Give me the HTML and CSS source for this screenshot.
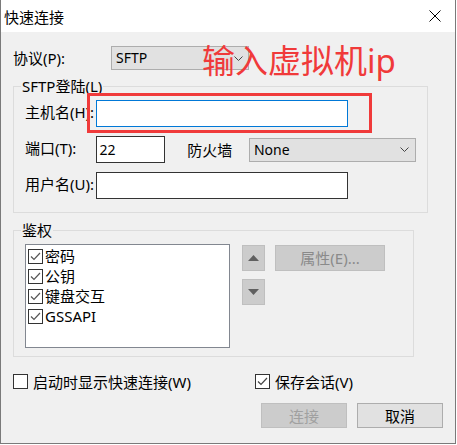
FILE: index.html
```html
<!DOCTYPE html>
<html lang="zh-CN">
<head>
<meta charset="utf-8">
<title>快速连接</title>
<link rel="stylesheet" href="styles.css">
</head>
<body>
<div class="window">
  <div class="titlebar">
    <span class="title">快速连接</span>
    <svg class="close" width="12" height="12" viewBox="0 0 12 12"><path d="M0.5 0.5 L11.5 11.5 M11.5 0.5 L0.5 11.5" stroke="#000" stroke-width="1" fill="none"/></svg>
  </div>
  <div class="content">
    <div class="proto-row">
      <span class="lbl lbl-proto">协议(P):</span>
      <div class="combo combo-proto"><span>SFTP</span><svg class="chev" width="9" height="5" viewBox="0 0 9 5"><path d="M0.5 0.5 L4.5 4.5 L8.5 0.5" stroke="#444" fill="none"/></svg></div>
    </div>
    <div class="group group-login">
      <div class="group-title">SFTP登陆(L)</div>
      <div class="field-row">
        <span class="lbl lbl-field">主机名(H):</span>
        <div class="input input-wide focused"></div>
      </div>
      <div class="field-row">
        <span class="lbl lbl-field">端口(T):</span>
        <div class="input input-port">22</div>
        <span class="lbl lbl-fw">防火墙</span>
        <div class="combo combo-fw"><span>None</span><svg class="chev" width="9" height="5" viewBox="0 0 9 5"><path d="M0.5 0.5 L4.5 4.5 L8.5 0.5" stroke="#444" fill="none"/></svg></div>
      </div>
      <div class="field-row">
        <span class="lbl lbl-field">用户名(U):</span>
        <div class="input input-wide"></div>
      </div>
    </div>
    <div class="group group-auth">
      <div class="group-title">鉴权</div>
      <div class="auth-body">
        <div class="listbox">
          <div class="item"><span class="cb checked"><svg width="13" height="13" viewBox="0 0 13 13"><path d="M2 6.5 L5 9.5 L11 3" stroke="#555" stroke-width="1.2" fill="none"/></svg></span><span>密码</span></div>
          <div class="item"><span class="cb checked"><svg width="13" height="13" viewBox="0 0 13 13"><path d="M2 6.5 L5 9.5 L11 3" stroke="#555" stroke-width="1.2" fill="none"/></svg></span><span>公钥</span></div>
          <div class="item"><span class="cb checked"><svg width="13" height="13" viewBox="0 0 13 13"><path d="M2 6.5 L5 9.5 L11 3" stroke="#555" stroke-width="1.2" fill="none"/></svg></span><span>键盘交互</span></div>
          <div class="item"><span class="cb checked"><svg width="13" height="13" viewBox="0 0 13 13"><path d="M2 6.5 L5 9.5 L11 3" stroke="#555" stroke-width="1.2" fill="none"/></svg></span><span>GSSAPI</span></div>
        </div>
        <div class="arrows">
          <div class="btn arrow-btn"><svg width="11" height="6" viewBox="0 0 11 6"><polygon points="5.5,0 11,6 0,6" fill="#606060"/></svg></div>
          <div class="btn arrow-btn"><svg width="11" height="6" viewBox="0 0 11 6"><polygon points="0,0 11,0 5.5,6" fill="#606060"/></svg></div>
        </div>
        <div class="btn btn-disabled btn-prop">属性(E)...</div>
      </div>
    </div>
    <div class="options-row">
      <div class="opt opt-start"><span class="cb"></span><span>启动时显示快速连接(W)</span></div>
      <div class="opt"><span class="cb checked"><svg width="13" height="13" viewBox="0 0 13 13"><path d="M2 6.5 L5 9.5 L11 3" stroke="#444" stroke-width="1.2" fill="none"/></svg></span><span>保存会话(V)</span></div>
    </div>
    <div class="buttons-row">
      <div class="btn btn-disabled btn-main">连接</div>
      <div class="btn btn-normal btn-main">取消</div>
    </div>
  </div>
  <div class="annot-box"></div>
  <div class="annot-text">输入虚拟机ip</div>
</div>
</body>
</html>
```

FILE: styles.css
```css
html, body {
  margin: 0;
  padding: 0;
  background: #ffffff;
}
body {
  font-family: "Noto Sans", "Noto Sans CJK SC", sans-serif;
  font-size: 15px;
  line-height: 16px;
  color: #000;
}
.window {
  position: relative;
  width: 456px;
  height: 444px;
  box-sizing: border-box;
  border: 1px solid #7a7a7a;
  border-top: none;
  background: #f0f0f0;
  display: flex;
  flex-direction: column;
}
.titlebar {
  height: 32px;
  background: #ffffff;
  display: flex;
  align-items: center;
  justify-content: space-between;
  padding-left: 3px;
  padding-right: 14px;
}
.title {
  font-size: 15px;
  line-height: 16px;
  margin-top: 2px;
}
.close {
  display: block;
}
.content {
  padding-left: 12px;
  display: flex;
  flex-direction: column;
}
.proto-row {
  margin-top: 14px;
  height: 24px;
  display: flex;
  align-items: center;
}
.lbl {
  white-space: nowrap;
}
.lbl-proto {
  width: 98px;
}
.combo {
  box-sizing: border-box;
  background: #e1e1e1;
  border: 1px solid #adadad;
  display: flex;
  align-items: center;
  justify-content: space-between;
  padding-left: 4px;
  padding-right: 5px;
  font-size: 14px;
}
.chev {
  display: block;
}
.combo-proto {
  width: 138px;
  height: 24px;
}
.combo-fw {
  width: 168px;
  height: 24px;
  padding-right: 6px;
}
.group {
  box-sizing: border-box;
  border: 1px solid #dcdcdc;
  height: 127px;
  padding: 0 11px;
}
.group-login {
  width: 415px;
  margin-top: 16px;
}
.group-auth {
  width: 401px;
  margin-top: 17px;
}
.group-title {
  display: block;
  width: fit-content;
  margin: -9px 0 0 -4px;
  padding: 0 1px;
  background: #f0f0f0;
  line-height: 16px;
  height: 16px;
}
.field-row {
  display: flex;
  align-items: center;
  height: 27px;
  margin-top: 9px;
}
.group-title + .field-row {
  margin-top: 6px;
}
.lbl-field {
  width: 71px;
  margin-top: -3px;
}
.input {
  box-sizing: border-box;
  height: 27px;
  background: #fff;
  border: 1px solid #333;
  padding-left: 3px;
  display: flex;
  align-items: center;
  font-size: 14px;
}
.input-wide {
  width: 252px;
}
.input.focused {
  border-color: #0078d7;
}
.input-port {
  width: 70px;
}
.lbl-fw {
  margin-left: 22px;
  width: 62px;
}
.auth-body {
  display: flex;
  align-items: flex-start;
  margin-top: 6px;
}
.listbox {
  box-sizing: border-box;
  width: 205px;
  height: 104px;
  background: #fff;
  border: 1px solid #828790;
  padding: 1px 0 0 2px;
}
.item {
  height: 20px;
  display: flex;
  align-items: center;
  gap: 2px;
}
.cb {
  box-sizing: border-box;
  width: 15px;
  height: 15px;
  border: 1px solid #333;
  background: #fff;
  display: flex;
  align-items: center;
  justify-content: center;
  flex: none;
}
.cb svg {
  display: block;
}
.arrows {
  margin-left: 12px;
  margin-top: 1px;
  display: flex;
  flex-direction: column;
  gap: 8px;
}
.btn {
  box-sizing: border-box;
  display: flex;
  align-items: center;
  justify-content: center;
}
.arrow-btn {
  width: 23px;
  height: 26px;
  background: #cccccc;
  border: 1px solid #bfbfbf;
}
.arrow-btn svg {
  display: block;
}
.btn-disabled {
  background: #cccccc;
  border: 1px solid #bfbfbf;
  color: #8a8a8a;
}
.btn-normal {
  background: #e1e1e1;
  border: 1px solid #adadad;
}
.btn-prop {
  margin-left: 10px;
  margin-top: 1px;
  width: 110px;
  height: 26px;
}
.options-row {
  margin-top: 17px;
  height: 15px;
  display: flex;
  align-items: center;
}
.opt {
  display: flex;
  align-items: center;
  gap: 5px;
  white-space: nowrap;
}
.opt-start {
  width: 242px;
}
.buttons-row {
  margin-top: 14px;
  display: flex;
  justify-content: flex-end;
  gap: 10px;
  padding-right: 12px;
}
.btn-main {
  width: 86px;
  height: 25px;
}
.btn-main.btn-disabled {
  color: #a0a0a0;
}
.annot-box {
  position: absolute;
  left: 86px;
  top: 93px;
  width: 285px;
  height: 40px;
  box-sizing: border-box;
  border: 3px solid #f03a3a;
}
.annot-text {
  position: absolute;
  left: 201px;
  top: 43px;
  font-family: "Noto Sans", "Noto Sans CJK SC", sans-serif;
  font-size: 33px;
  line-height: 36px;
  color: #f03a3a;
  white-space: nowrap;
}
```
